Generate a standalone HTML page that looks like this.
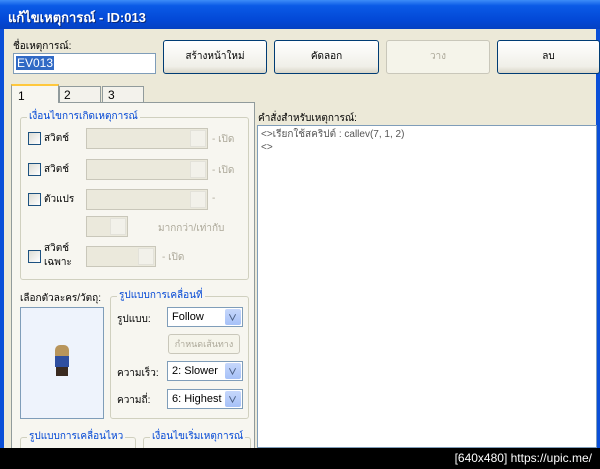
<!DOCTYPE html>
<html><head><meta charset="utf-8"><style>
*{margin:0;padding:0;box-sizing:border-box}
body{width:600px;height:469px;overflow:hidden;background:#000;font-family:"Liberation Sans","Noto Sans CJK SC",sans-serif;font-size:10px;color:#000;position:relative}
.a{position:absolute;white-space:nowrap}
#win{left:0;top:0;width:600px;height:448px;background:#0a4fd8;overflow:hidden}
#tb{left:0;top:0;width:600px;height:29px;background:linear-gradient(#3d8cf7,#0a5ae6 20%,#0348d6 70%,#0541c2);color:#fff;font-weight:bold;font-size:13px;padding:7px 0 0 8px;text-shadow:1px 1px #0a2a7a}
.btn{position:absolute;border:1px solid #003c74;border-radius:3px;background:linear-gradient(#fff,#f0efe8 80%,#d8d5c8);text-align:center;font-size:10px;line-height:31px}
.dis{border-color:#c9c7ba;color:#aca899;background:#f5f4ea}
.grp{position:absolute;border:1px solid #d0d0bf;border-radius:3px}
.gl{position:absolute;background:#f7f6f0;color:#0046d5;padding:0 2px;top:-8px;left:6px;font-size:10px;white-space:nowrap;line-height:14px}
.cb{position:absolute;width:13px;height:13px;border:1px solid #1c5180;background:linear-gradient(135deg,#dcdcd5,#fff)}
.cmbd{position:absolute;border:1px solid #c9c7ba;background:#ebe9dc}
.cmbd:after{content:"";position:absolute;right:1px;top:1px;width:14px;bottom:1px;background:#f2f1ea;border:1px solid #e3e2da}
.gt{position:absolute;color:#aca899;white-space:nowrap}
.cmb{position:absolute;border:1px solid #7f9db9;background:#fff;font-size:11px;padding:3px 0 0 4px;height:20px;white-space:nowrap}
.cmb:after{content:"";position:absolute;right:1px;top:1px;width:16px;height:16px;background:linear-gradient(#c6d7fb,#a6c1f8);border-radius:2px}
.cmb b{position:absolute;right:5px;top:3px;font-size:9px;color:#4d6185;z-index:2;font-weight:bold}
</style></head><body>
<div id="win" class="a">
<div id="tb" class="a">แก้ไขเหตุการณ์ - ID:013</div>
</div>
<div class="a" style="left:4px;top:29px;width:592px;height:419px;background:#ece9d8"></div>
<div class="a" style="left:13px;top:39px">ชื่อเหตุการณ์:</div>
<div class="a" style="left:13px;top:53px;width:143px;height:21px;border:1px solid #7f9db9;background:#fff"><span style="background:#316ac5;color:#fff;font-size:12px;position:absolute;left:2px;top:2px;padding:0 1px">EV013</span></div>
<div class="btn" style="left:163px;top:40px;width:104px;height:34px">สร้างหน้าใหม่</div>
<div class="btn" style="left:274px;top:40px;width:105px;height:34px">คัดลอก</div>
<div class="btn dis" style="left:386px;top:40px;width:104px;height:34px">วาง</div>
<div class="btn" style="left:497px;top:40px;width:103px;height:34px">ลบ</div>
<div class="a" style="left:11px;top:102px;width:244px;height:346px;background:#f7f6f0;border:1px solid #919b9c;border-bottom:none"></div>
<div class="a" style="left:11px;top:84px;width:48px;height:19px;background:#f7f6f0;border:1px solid #919b9c;border-bottom:none;border-top:2px solid #ffc83c;padding:3px 0 0 6px;font-size:12px">1</div>
<div class="a" style="left:59px;top:86px;width:42px;height:16px;background:#f3f2ec;border:1px solid #919b9c;border-bottom:none;padding:1px 0 0 4px;font-size:12px">2</div>
<div class="a" style="left:102px;top:86px;width:42px;height:16px;background:#f3f2ec;border:1px solid #919b9c;border-bottom:none;padding:1px 0 0 5px;font-size:12px">3</div>
<div class="a" style="left:258px;top:111px">คำสั่งสำหรับเหตุการณ์:</div>
<div class="a" style="left:257px;top:125px;width:340px;height:323px;background:#fff;border:1px solid #7f9db9;padding:2px 0 0 3px;color:#555;line-height:13px">&lt;&gt;เรียกใช้สคริปต์ : callev(7, 1, 2)<br>&lt;&gt;</div>
<div class="grp" style="left:20px;top:117px;width:229px;height:163px"><span class="gl">เงื่อนไขการเกิดเหตุการณ์</span></div>
<div class="cb" style="left:28px;top:132px"></div><div class="a" style="left:44px;top:131px">สวิตช์</div>
<div class="cmbd" style="left:86px;top:128px;width:122px;height:21px"></div><div class="gt" style="left:212px;top:132px">- เปิด</div>
<div class="cb" style="left:28px;top:163px"></div><div class="a" style="left:44px;top:162px">สวิตช์</div>
<div class="cmbd" style="left:86px;top:159px;width:122px;height:21px"></div><div class="gt" style="left:212px;top:163px">- เปิด</div>
<div class="cb" style="left:28px;top:193px"></div><div class="a" style="left:44px;top:192px">ตัวแปร</div>
<div class="cmbd" style="left:86px;top:189px;width:122px;height:21px"></div><div class="gt" style="left:212px;top:193px">-</div>
<div class="cmbd" style="left:86px;top:216px;width:42px;height:21px"></div><div class="gt" style="left:158px;top:221px">มากกว่า/เท่ากับ</div>
<div class="cb" style="left:28px;top:250px"></div><div class="a" style="left:44px;top:242px;line-height:14px">สวิตช์<br>เฉพาะ</div>
<div class="cmbd" style="left:86px;top:246px;width:70px;height:21px"></div><div class="gt" style="left:162px;top:250px">- เปิด</div>
<div class="a" style="left:20px;top:291px">เลือกตัวละคร/วัตถุ:</div>
<div class="a" style="left:20px;top:307px;width:84px;height:112px;background:#eef3fc;border:1px solid #7f9db9"></div>
<div class="a" style="left:55px;top:345px;width:14px;height:12px;background:#b8955c;border-radius:5px 5px 2px 2px"></div>
<div class="a" style="left:55px;top:356px;width:14px;height:11px;background:#2f4fa0"></div>
<div class="a" style="left:56px;top:367px;width:12px;height:9px;background:#3a2a20"></div>
<div class="grp" style="left:110px;top:296px;width:139px;height:123px"><span class="gl">รูปแบบการเคลื่อนที่</span></div>
<div class="a" style="left:117px;top:312px">รูปแบบ:</div>
<div class="cmb" style="left:167px;top:307px;width:76px">Follow<b>∨</b></div>
<div class="a" style="left:168px;top:334px;width:72px;height:20px;border:1px solid #c9c7ba;border-radius:3px;background:#f5f4ea;color:#aca899;text-align:center;line-height:18px;font-size:9px;overflow:hidden">กำหนดเส้นทาง</div>
<div class="a" style="left:117px;top:366px">ความเร็ว:</div>
<div class="cmb" style="left:167px;top:361px;width:76px">2: Slower<b>∨</b></div>
<div class="a" style="left:117px;top:393px">ความถี่:</div>
<div class="cmb" style="left:167px;top:389px;width:76px">6: Highest<b>∨</b></div>
<div class="grp" style="left:20px;top:437px;width:116px;height:30px"><span class="gl">รูปแบบการเคลื่อนไหว</span></div>
<div class="grp" style="left:143px;top:437px;width:108px;height:30px"><span class="gl">เงื่อนไขเริ่มเหตุการณ์</span></div>
<div class="a" style="left:0;top:448px;width:600px;height:21px;background:#000;color:#fff;font-size:12px;text-align:right;padding:3px 8px 0 0">[640x480] https://upic.me/</div>
</body></html>
